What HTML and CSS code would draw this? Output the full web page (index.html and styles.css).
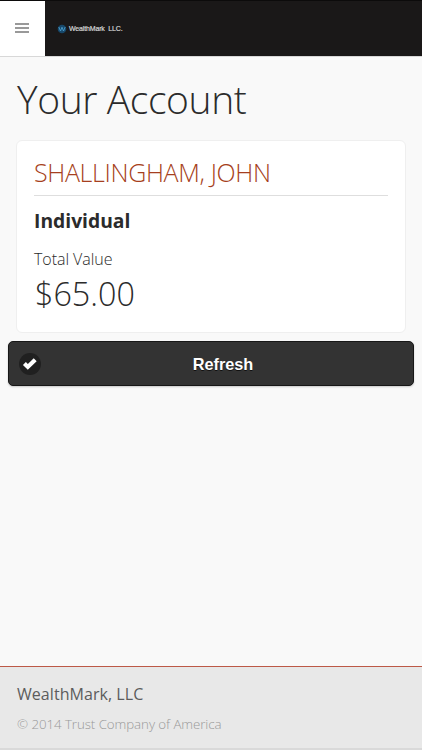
FILE: index.html
```html
<!DOCTYPE html>
<html lang="en">
<head>
<meta charset="utf-8">
<title>Your Account</title>
<link rel="stylesheet" href="styles.css">
</head>
<body>
<header class="topbar">
  <button class="menu" aria-label="Menu"><span></span><span></span><span></span></button>
  <div class="brand">
    <svg class="logo" viewBox="0 0 10 10"><circle cx="5" cy="5" r="4.3"/><path d="M1.8 3l1.7 4L5 3.2 6.5 7l1.7-4"/></svg>
    <span class="brand-name">WealthMark&nbsp; LLC.</span>
  </div>
</header>
<main>
  <h1><span>Your Account</span></h1>
  <section class="card">
    <h2><span>SHALLINGHAM, JOHN</span></h2>
    <h3><span>Individual</span></h3>
    <p class="label"><span>Total Value</span></p>
    <p class="value"><span>$65.00</span></p>
  </section>
  <button class="refresh">
    <span class="check"><svg viewBox="0 0 22 22"><path d="M5.4 10.6l3.4 3.3 7.4-7.2"/></svg></span>
    <span class="refresh-text">Refresh</span>
  </button>
</main>
<footer>
  <p class="company"><span>WealthMark, LLC</span></p>
  <p class="copyright"><span>© 2014 Trust Company of America</span></p>
</footer>
</body>
</html>
```
FILE: styles.css
```css
* { box-sizing: border-box; }
body {
  margin: 0;
  height: 750px;
  display: flex;
  flex-direction: column;
  background: #f9f9f9;
  color: #2b2b2b;
  font-family: "Open Sans", "Noto Sans", sans-serif;
  font-weight: 300;
  overflow: hidden;
}
h1, h2, h3, p { margin: 0; white-space: nowrap; }
button { border: 0; padding: 0; }
.topbar {
  height: 57px;
  flex: none;
  display: flex;
  background: #1a1818;
  border-top: 1px solid #0c0b0b;
  border-bottom: 1px solid #d8d8d8;
}
.menu {
  width: 45px;
  padding-bottom: 1px;
  display: flex;
  flex-direction: column;
  align-items: center;
  justify-content: center;
  gap: 2px;
  background: #fff;
}
.menu span {
  width: 14px;
  height: 2px;
  margin-right: 2px;
  background: #999;
}
.brand {
  display: flex;
  align-items: center;
  gap: 2px;
  padding-left: 12px;
  color: #d4d4d4;
}
.logo { width: 10px; height: 10px; }
.logo circle { fill: #174769; }
.logo path { fill: none; stroke: #4b9cc9; stroke-width: 0.9; }
.brand-name {
  font: 400 7px/10px "Liberation Sans", Arial, sans-serif;
  letter-spacing: -0.15px;
  -webkit-text-stroke: 0.2px #d4d4d4;
}
main { flex: 1; padding: 0 17px; }
h1 {
  height: 83px;
  font-size: 39px;
  line-height: 83px;
  letter-spacing: -0.4px;
  font-weight: 300;
}
.card {
  height: 193px;
  margin: 0 -1px;
  padding: 10px 17px 0;
  background: #fff;
  border: 1px solid #efefef;
  border-radius: 6px;
}
h2 {
  height: 45px;
  border-bottom: 1px solid #dedede;
  color: #a63f20;
  font-size: 25px;
  line-height: 43px;
  letter-spacing: -0.34px;
  font-weight: 300;
}
h3 { height: 50px; font-size: 19.3px; line-height: 49px; font-weight: 700; }
.label { font-size: 16px; line-height: 26px; letter-spacing: -0.05px; }
.value { padding-left: 1px; font-size: 32.3px; line-height: 42px; }
.refresh {
  width: 406px;
  height: 45px;
  margin: 8px -9px 0;
  padding-left: 10px;
  display: flex;
  align-items: center;
  background: #333;
  border: 1px solid #171717;
  border-radius: 5px;
  box-shadow: 0 1px 2px rgba(0, 0, 0, 0.2);
  color: #fff;
}
.check { width: 22px; height: 22px; border-radius: 50%; background: #202020; }
.check svg { display: block; width: 22px; height: 22px; }
.check path { fill: none; stroke: #fff; stroke-width: 4.2; }
.refresh-text {
  flex: 1;
  padding-right: 8px;
  font: 700 16.3px/20px "Liberation Sans", Arial, sans-serif;
  text-shadow: 0 1px 0 #111;
}
footer {
  height: 84px;
  flex: none;
  padding: 10px 17px 0;
  background: #e8e8e8;
  border-top: 1px solid #bd5947;
  border-bottom: 2px solid #d9d9d9;
}
.company { color: #5c5c5c; font-size: 16px; line-height: 34px; font-weight: 400; letter-spacing: 0.05px; }
.copyright { color: #999; font-size: 13.3px; line-height: 27px; letter-spacing: -0.06px; }
```
